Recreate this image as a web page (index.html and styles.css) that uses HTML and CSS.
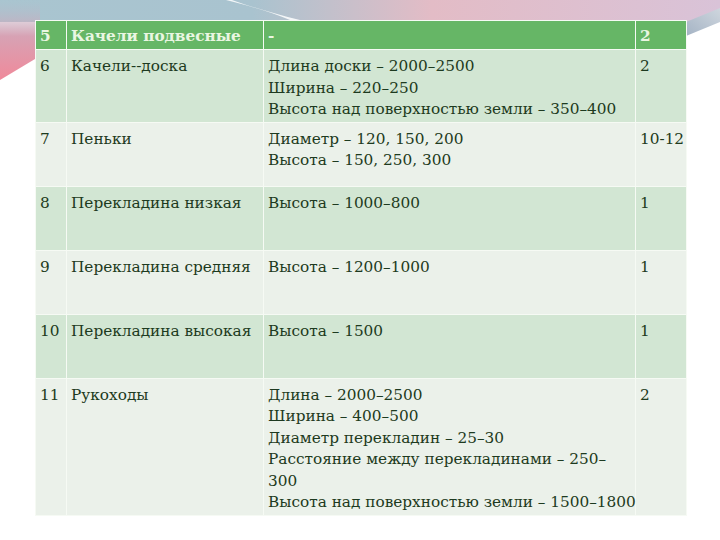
FILE: index.html
```html
<!DOCTYPE html>
<html lang="ru">
<head>
<meta charset="utf-8">
<link rel="stylesheet" href="styles.css">
</head>
<body>
<svg class="deco" width="720" height="540" viewBox="0 0 720 540" aria-hidden="true">
  <defs>
    <linearGradient id="gTop" x1="0" y1="0" x2="1" y2="0">
      <stop offset="0" stop-color="#a9c5d0"/>
      <stop offset="0.35" stop-color="#a9c3cf"/>
      <stop offset="0.6" stop-color="#e3bcc6"/>
      <stop offset="1" stop-color="#d9c3d8"/>
    </linearGradient>
    <linearGradient id="gLeft" x1="0" y1="0" x2="0" y2="1">
      <stop offset="0" stop-color="#b5bccd" stop-opacity="0"/>
      <stop offset="0.45" stop-color="#d7a2b4"/>
      <stop offset="1" stop-color="#f0899a"/>
    </linearGradient>
    <linearGradient id="gRight" x1="0" y1="1" x2="1" y2="0">
      <stop offset="0" stop-color="#a4b3c4"/>
      <stop offset="1" stop-color="#cfd6de"/>
    </linearGradient>
  </defs>
  <path d="M0 0 H720 V18 L690 22 H0 Z" fill="url(#gTop)"/>
  <path d="M0 0 H40 V56 L0 80 Z" fill="url(#gLeft)"/>
  <path d="M232 0 C255 8 275 14 300 20 L290 20 C270 12 250 6 226 0 Z" fill="#ffffff" opacity="0.85"/>
  <path d="M686 22 L720 8 V22 L686 36 Z" fill="url(#gRight)"/>
</svg>
<table class="grid">
  <colgroup>
    <col class="c-num"><col class="c-name"><col class="c-spec"><col class="c-qty">
  </colgroup>
  <tr class="head">
    <td>5</td><td>Качели подвесные</td><td>-</td><td>2</td>
  </tr>
  <tr class="dark r6">
    <td>6</td><td>Качели--доска</td><td>Длина доски – 2000–2500<br>Ширина – 220–250<br>Высота над поверхностью земли – 350–400</td><td>2</td>
  </tr>
  <tr class="light">
    <td>7</td><td>Пеньки</td><td>Диаметр – 120, 150, 200<br>Высота – 150, 250, 300</td><td>10-12</td>
  </tr>
  <tr class="dark">
    <td>8</td><td>Перекладина низкая</td><td>Высота – 1000–800</td><td>1</td>
  </tr>
  <tr class="light">
    <td>9</td><td>Перекладина средняя</td><td>Высота – 1200–1000</td><td>1</td>
  </tr>
  <tr class="dark">
    <td>10</td><td>Перекладина высокая</td><td>Высота – 1500</td><td>1</td>
  </tr>
  <tr class="light r11">
    <td>11</td><td>Рукоходы</td><td>Длина – 2000–2500<br>Ширина – 400–500<br>Диаметр перекладин – 25–30<br>Расстояние между перекладинами – 250–<br>300<br>Высота над поверхностью земли – 1500–1800</td><td>2</td>
  </tr>
</table>
</body>
</html>
```

FILE: styles.css
```css
html, body {
  margin: 0;
  padding: 0;
}
body {
  width: 720px;
  height: 540px;
  background: #ffffff;
  position: relative;
  overflow: hidden;
  font-family: "DejaVu Serif", "Liberation Serif", serif;
}
.deco {
  position: absolute;
  left: 0;
  top: 0;
  z-index: 0;
}
.grid {
  position: relative;
  z-index: 1;
  margin: 20px 0 0 35px;
  width: 651px;
  border-collapse: collapse;
  table-layout: fixed;
  font-size: 15.3px;
  line-height: 21.5px;
  color: #1d3a20;
}
.c-num { width: 31px; }
.c-name { width: 197px; }
.c-spec { width: 372px; }
.c-qty { width: 51px; }
.grid td {
  border: 1px solid #f6faf4;
  vertical-align: top;
  padding: 6px 4px 1px 4px;
  height: 56px;
  white-space: nowrap;
}
.grid tr.head td {
  background: #66b666;
  color: #eaf6e2;
  font-weight: bold;
  height: 22px;
  padding-top: 5px;
  padding-bottom: 1px;
}
.grid tr.dark td { background: #d2e6d3; }
.grid tr.light td { background: #ebf1ea; }
.grid tr.r6 td { height: 63px; }
```
